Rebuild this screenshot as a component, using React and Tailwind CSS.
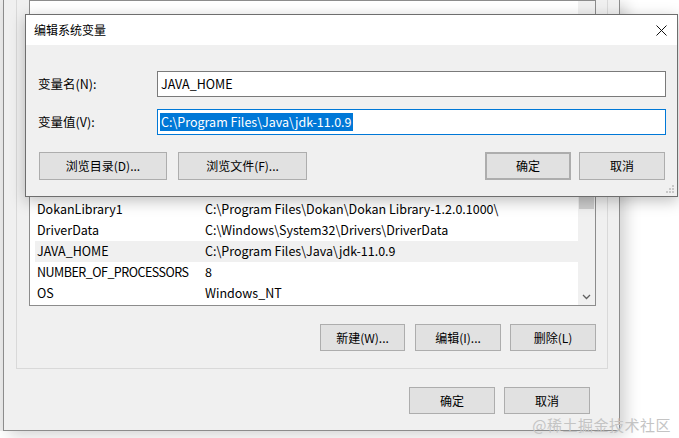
import React from "react";

function Btn({ children, className = "" }) {
  return (
    <div
      className={`flex items-center justify-center bg-[#e1e1e1] border border-[#adadad] text-[12px] text-black ${className}`}
    >
      {children}
    </div>
  );
}

const rows = [
  ["DokanLibrary1", "C:\\Program Files\\Dokan\\Dokan Library-1.2.0.1000\\", false],
  ["DriverData", "C:\\Windows\\System32\\Drivers\\DriverData", false],
  ["JAVA_HOME", "C:\\Program Files\\Java\\jdk-11.0.9", true],
  ["NUMBER_OF_PROCESSORS", "8", false],
  ["OS", "Windows_NT", false],
];

export default function App() {
  return (
    <div className="relative w-[679px] h-[438px] bg-white overflow-hidden text-black font-['Noto_Sans_CJK_SC',sans-serif]">
      <div className="flex h-[431px]">
        <div className="w-[3px] bg-[#ececec]" />
        <div className="w-[617px] flex flex-col bg-[#f0f0f0] border-l border-r border-b border-[#8c8c8c] shadow-[6px_4px_14px_rgba(0,0,0,0.18)]">
          {/* group box */}
          <div className="flex-1 flex flex-col ml-[12px] mr-[11px] border-l border-r border-b border-[#d9d9d9]">
            <div className="flex-1 flex ml-[12px] mr-[11px] border border-[#8c8c8c] bg-white">
              <div className="flex-1 flex flex-col justify-end pb-[1px] pl-[5px]">
                {rows.map(([n, v, sel]) => (
                  <div
                    key={n}
                    className={`flex items-center h-[21px] pl-[2px] pb-[2px] text-[12.5px] leading-[19px] ${sel ? "bg-[#f0f0f0]" : ""}`}
                  >
                    <span
                      className={`w-[168px] shrink-0 whitespace-nowrap ${n.length > 15 ? "tracking-[-0.5px]" : ""}`}
                    >
                      {n}
                    </span>
                    <span className="whitespace-nowrap">{v}</span>
                  </div>
                ))}
              </div>
              <div className="w-[17px] flex flex-col justify-end bg-[#f0f0f0]">
                <div className="h-[15px] mx-[1px] bg-[#cdcdcd]" />
                <div className="h-[79px]" />
                <div className="h-[17px] flex items-center justify-center">
                  <svg width="9" height="6" viewBox="0 0 9 6">
                    <path d="M1 1 L4.5 4.5 L8 1" stroke="#606060" strokeWidth="1.3" fill="none" />
                  </svg>
                </div>
              </div>
            </div>
            <div className="flex justify-end mt-[18px] mb-[17px] mr-[11px]">
              <Btn className="w-[85px] h-[27px]">新建(W)...</Btn>
              <Btn className="w-[86px] h-[27px] ml-[10px]">编辑(I)...</Btn>
              <Btn className="w-[86px] h-[27px] ml-[9px]">删除(L)</Btn>
            </div>
          </div>
          <div className="flex justify-end mt-[18px] mb-[16px] mr-[29px]">
            <Btn className="w-[86px] h-[27px]">确定</Btn>
            <Btn className="w-[86px] h-[27px] ml-[9px]">取消</Btn>
          </div>
        </div>
      </div>

      {/* Edit dialog */}
      <div className="absolute left-[25px] top-[14px] w-[653px] border border-[#6e6e6e] bg-[#f0f0f0] shadow-[0_4px_14px_rgba(0,0,0,0.25)]">
        <div className="h-[30px] bg-white flex items-center pl-[8px] text-[12px]">
          <span className="flex-1">编辑系统变量</span>
          <div className="w-[32px] h-[30px] flex items-center justify-center">
            <svg width="11" height="11" viewBox="0 0 11 11">
              <path d="M0.5 0.5 L10.5 10.5 M10.5 0.5 L0.5 10.5" stroke="#111" strokeWidth="1" fill="none" />
            </svg>
          </div>
        </div>
        <div className="relative pl-[12px] pr-[11px] pt-[26px] pb-[16px] text-[12.5px]">
          <div className="flex items-center h-[26px]">
            <span className="w-[119px] shrink-0">变量名(N):</span>
            <div className="flex-1 h-[26px] flex items-center bg-white border border-[#7a7a7a] pl-[3px]">
              JAVA_HOME
            </div>
          </div>
          <div className="flex items-center h-[26px] mt-[12px]">
            <span className="w-[119px] shrink-0">变量值(V):</span>
            <div className="flex-1 h-[26px] flex items-center bg-white border border-[#0078d7] pl-[2px]">
              <span className="bg-[#0078d7] text-white px-[1px] leading-[18px]">C:\Program Files\Java\jdk-11.0.9</span>
            </div>
          </div>
          <div className="flex items-center h-[28px] mt-[17px] pr-[1px]">
            <Btn className="w-[128px] h-[28px] ml-[1px]">浏览目录(D)...</Btn>
            <Btn className="w-[129px] h-[28px] ml-[11px]">浏览文件(F)...</Btn>
            <div className="flex-1" />
            <Btn className="w-[86px] h-[28px] border-2 border-[#0078d7]">确定</Btn>
            <Btn className="w-[86px] h-[28px] ml-[8px]">取消</Btn>
          </div>
          <svg className="absolute right-[3px] bottom-[3px]" width="8" height="8" viewBox="0 0 8 8">
            <rect x="6" y="0" width="2" height="2" fill="#c8c8c8" />
            <rect x="3" y="3" width="2" height="2" fill="#c8c8c8" />
            <rect x="6" y="3" width="2" height="2" fill="#c8c8c8" />
            <rect x="0" y="6" width="2" height="2" fill="#c8c8c8" />
            <rect x="3" y="6" width="2" height="2" fill="#c8c8c8" />
            <rect x="6" y="6" width="2" height="2" fill="#c8c8c8" />
          </svg>
        </div>
      </div>

      <div className="absolute right-[8px] bottom-[3px] text-[15px] leading-[20px] text-[#c4c4c4] tracking-[0.5px]">
        @稀土掘金技术社区
      </div>
    </div>
  );
}
